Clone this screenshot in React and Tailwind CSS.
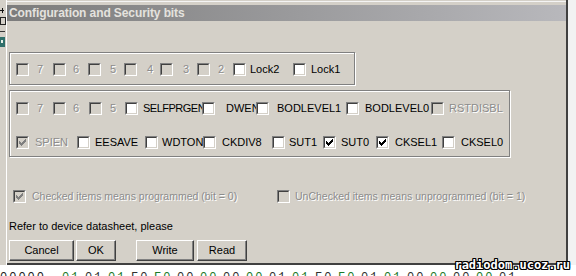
import React from 'react';

const MARK = [
  [6, 0, 1], [5, 1, 2], [0, 2, 1], [4, 2, 3], [0, 3, 2], [3, 3, 3], [0, 4, 5], [1, 5, 3], [2, 6, 1],
];

function Box({ checked, disabled }) {
  return (
    <span className="relative z-10 flex w-[13px] h-[13px] shrink-0 border border-t-[#808080] border-l-[#808080] border-b-white border-r-white bg-[#d4d0c8]">
      <span
        className={`flex flex-1 items-center justify-center border border-t-[#404040] border-l-[#404040] border-b-[#d4d0c8] border-r-[#d4d0c8] ${
          disabled ? 'bg-[#d4d0c8]' : 'bg-white'
        }`}
      >
        {checked && (
          <svg width="7" height="7" viewBox="0 0 7 7" shapeRendering="crispEdges">
            {MARK.map(([x, y, w], i) => (
              <rect key={i} x={x} y={y} width={w} height="1" fill={disabled ? '#808080' : '#000'} />
            ))}
          </svg>
        )}
      </span>
    </span>
  );
}

function Item({ w, ml, label, checked, disabled, small, tight }) {
  return (
    <div className={`flex items-center shrink-0 ${w}`}>
      <Box checked={checked} disabled={disabled} />
      <span
        className={`${ml} whitespace-nowrap leading-[13px] ${small ? 'text-[10.5px]' : ''} ${tight ? 'tracking-[-0.5px]' : ''} ${
          disabled ? 'text-[#8c8c8c] [text-shadow:1px_1px_0_#fff]' : 'text-black'
        }`}
      >
        {label}
      </span>
    </div>
  );
}

const lockBits = [
  { w: 'w-[37px]', ml: 'ml-[8px]', label: '7', disabled: true },
  { w: 'w-[35px]', ml: 'ml-[7px]', label: '6', disabled: true },
  { w: 'w-[36px]', ml: 'ml-[9px]', label: '5', disabled: true },
  { w: 'w-[36px]', ml: 'ml-[10px]', label: '4', disabled: true },
  { w: 'w-[37px]', ml: 'ml-[10px]', label: '3', disabled: true },
  { w: 'w-[36px]', ml: 'ml-[8px]', label: '2', disabled: true },
  { w: 'w-[60px]', ml: 'ml-[4px]', label: 'Lock2' },
  { w: 'w-[50px]', ml: 'ml-[5px]', label: 'Lock1' },
];

const highFuse = [
  { w: 'w-[37px]', ml: 'ml-[8px]', label: '7', disabled: true },
  { w: 'w-[36px]', ml: 'ml-[7px]', label: '6', disabled: true },
  { w: 'w-[36px]', ml: 'ml-[8px]', label: '5', disabled: true },
  { w: 'w-[77px]', ml: 'ml-[5px]', label: 'SELFPRGEN', tight: true },
  { w: 'w-[54px]', ml: 'ml-[11px]', label: 'DWEN' },
  { w: 'w-[90px]', ml: 'ml-[8px]', label: 'BODLEVEL1' },
  { w: 'w-[85px]', ml: 'ml-[6px]', label: 'BODLEVEL0' },
  { w: 'w-[74px]', ml: 'ml-[5px]', label: 'RSTDISBL', disabled: true },
];

const lowFuse = [
  { w: 'w-[61px]', ml: 'ml-[6px]', label: 'SPIEN', checked: true, disabled: true },
  { w: 'w-[68px]', ml: 'ml-[5px]', label: 'EESAVE' },
  { w: 'w-[58px]', ml: 'ml-[4px]', label: 'WDTON' },
  { w: 'w-[69px]', ml: 'ml-[6px]', label: 'CKDIV8' },
  { w: 'w-[51px]', ml: 'ml-[4px]', label: 'SUT1' },
  { w: 'w-[53px]', ml: 'ml-[5px]', label: 'SUT0', checked: true },
  { w: 'w-[66px]', ml: 'ml-[6px]', label: 'CKSEL1', checked: true },
  { w: 'w-[60px]', ml: 'ml-[6px]', label: 'CKSEL0' },
];

function Button({ w, ml, children }) {
  return (
    <button
      className={`${w} ${ml} h-[21px] bg-[#d4d0c8] border border-t-white border-l-white border-b-[#404040] border-r-[#404040] shadow-[inset_-1px_-1px_0_#808080] text-black text-[11px] leading-none`}
    >
      {children}
    </button>
  );
}

const hex = ['01', '01', '01', 'F0', 'F0', '00', '00', '00', '00', '01', '01', 'F0', 'F0', '01', '01', '00', '00', '00', '00', '01'];

export default function App() {
  return (
    <div className="relative w-[576px] h-[276px] overflow-hidden bg-white font-['Liberation_Sans',Arial,sans-serif] text-[11px]">
      <div className="flex h-[265px]">
        {/* toolbar of the window behind */}
        <div className="w-[7px] bg-[#d4d0c8] border-r border-white">
          <svg width="6" height="60" viewBox="0 0 6 60" shapeRendering="crispEdges">
            <rect x="0" y="10" width="4" height="1" fill="#111" />
            <rect x="2" y="8" width="1" height="5" fill="#111" />
            <rect x="0" y="17" width="5" height="7" fill="none" stroke="#222" />
            <rect x="0" y="31" width="5" height="1" fill="#333" />
            <rect x="0" y="37" width="5" height="10" fill="#2f6f6a" />
            <rect x="1" y="40" width="2" height="3" fill="#e8f0e8" />
          </svg>
        </div>

        {/* dialog */}
        <div className="w-[561px] bg-[#d4d0c8] border-r-2 border-r-[#404040] border-b-2 border-b-[#404040] flex flex-col">
          <div className="h-[1px]" />
          <div className="h-[1px] bg-[#f4f4f4]" />
          <div className="h-[3px]" />
          <div className="h-[16px] bg-gradient-to-r from-[#7c7c7c] to-[#b8b8bc] flex items-center pl-[2px]">
            <span className="text-[12px] font-bold text-[#e4e2de] tracking-[-0.1px] leading-none">
              Configuration and Security bits
            </span>
          </div>

          <div className="px-[2px] flex flex-col">
            <div className="mt-[31px] w-[346px] h-[33px] border border-[#808080] shadow-[inset_1px_1px_0_#fff,1px_1px_0_#fff] pt-[10px] pl-[6px]">
              <div className="flex">
                {lockBits.map((b) => (
                  <Item key={b.label} {...b} />
                ))}
              </div>
            </div>

            <div className="mt-[5px] w-[501px] h-[67px] border border-[#808080] shadow-[inset_1px_1px_0_#fff,1px_1px_0_#fff] pt-[11px] pl-[6px] flex flex-col gap-[21px]">
              <div className="flex">
                {highFuse.map((b) => (
                  <Item key={b.label} {...b} />
                ))}
              </div>
              <div className="flex">
                {lowFuse.map((b) => (
                  <Item key={b.label} {...b} />
                ))}
              </div>
            </div>

            <div className="mt-[33px] flex pl-[4px]">
              <Item w="w-[264px]" ml="ml-[6px]" label="Checked items means programmed (bit = 0)" checked disabled small />
              <Item w="w-[270px]" ml="ml-[5px]" label="UnChecked items means unprogrammed (bit = 1)" disabled small />
            </div>

            <div className="mt-[17px] h-[13px] leading-[13px] text-black">Refer to device datasheet, please</div>

            <div className="mt-[7px] flex">
              <Button w="w-[65px]" ml="ml-0">Cancel</Button>
              <Button w="w-[40px]" ml="ml-[2px]">OK</Button>
              <Button w="w-[58px]" ml="ml-[20px]">Write</Button>
              <Button w="w-[50px]" ml="ml-[3px]">Read</Button>
            </div>
          </div>
        </div>

        <div className="flex-1 bg-[#f2f2f2]" />
      </div>

      {/* hex dump of the window behind, only the tops are visible */}
      <div className="h-[11px] overflow-hidden bg-white flex font-['Liberation_Mono',monospace] text-[12px] leading-none pt-[7px] tracking-[2px]">
        <span className="shrink-0 w-[62px] text-[#202020]">00000</span>
        {hex.map((h, i) => (
          <span key={i} className={`shrink-0 w-[23px] ${i % 2 ? 'text-[#303030]' : 'text-[#1c7a2a]'}`}>
            {h}
          </span>
        ))}
      </div>

      <div className="absolute right-[6px] bottom-[5px] font-['DejaVu_Sans_Mono',monospace] font-bold text-[12px] leading-none text-white [text-shadow:1px_0_0_#000,-1px_0_0_#000,0_1px_0_#000,0_-1px_0_#000,1px_1px_0_#000,-1px_-1px_0_#000,1px_-1px_0_#000,-1px_1px_0_#000]">
        radiodom.ucoz.ru
      </div>
    </div>
  );
}
